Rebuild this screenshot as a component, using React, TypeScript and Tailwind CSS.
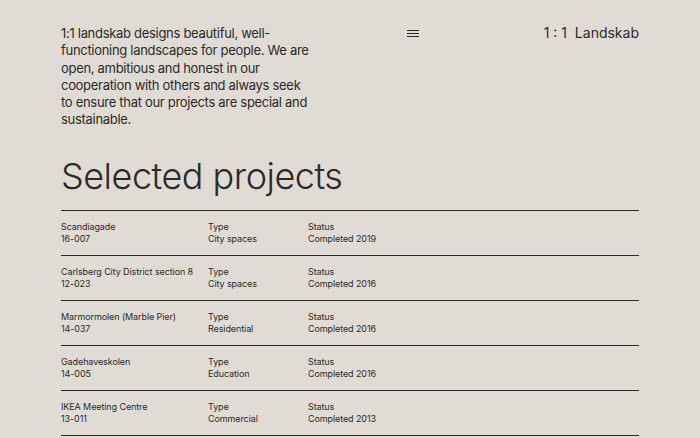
const rows = [
  ["Scandiagade", "16-007", "City spaces", "Completed 2019"],
  ["Carlsberg City District section 8", "12-023", "City spaces", "Completed 2016"],
  ["Marmormolen (Marble Pier)", "14-037", "Residential", "Completed 2016"],
  ["Gadehaveskolen", "14-005", "Education", "Completed 2016"],
  ["IKEA Meeting Centre", "13-011", "Commercial", "Completed 2013"],
];
export default function App() {
  return (
    <div className="w-[700px] h-[438px] overflow-hidden bg-[#e0dcd5] text-[#2b2a28] px-[61px] pt-[25px]" style={{ fontFamily: "Inter, sans-serif" }}>
      <div className="flex items-start">
        <p className="w-[250px] shrink-0 text-[13px] leading-[17.3px] tracking-[-0.3px]">
          1:1 landskab designs beautiful, well-functioning landscapes for people. We are open, ambitious and honest in our cooperation with others and always seek to ensure that our projects are special and sustainable.
        </p>
        <div className="ml-[96px] mt-[5px] flex flex-col gap-[2px]">
          <div className="w-[12px] h-px bg-[#2b2a28]" />
          <div className="w-[12px] h-px bg-[#2b2a28]" />
          <div className="w-[12px] h-px bg-[#2b2a28]" />
        </div>
        <div className="ml-auto text-[14px] leading-[16px]">1 : 1&nbsp;&nbsp;Landskab</div>
      </div>
      <h1 className="mt-[25px] text-[36px] leading-[44px] font-light tracking-[-0.5px]">Selected projects</h1>
      <div className="mt-[12px] border-t border-[#2b2a28]">
        {rows.map((r) => (
          <div key={r[0]} className="h-[45px] border-b border-[#2b2a28] flex pt-[10px] text-[9px] leading-[12.5px] tracking-[-0.1px]">
            <div className="w-[147px]"><div>{r[0]}</div><div>{r[1]}</div></div>
            <div className="w-[100px]"><div>Type</div><div>{r[2]}</div></div>
            <div><div>Status</div><div>{r[3]}</div></div>
          </div>
        ))}
      </div>
    </div>
  );
}
